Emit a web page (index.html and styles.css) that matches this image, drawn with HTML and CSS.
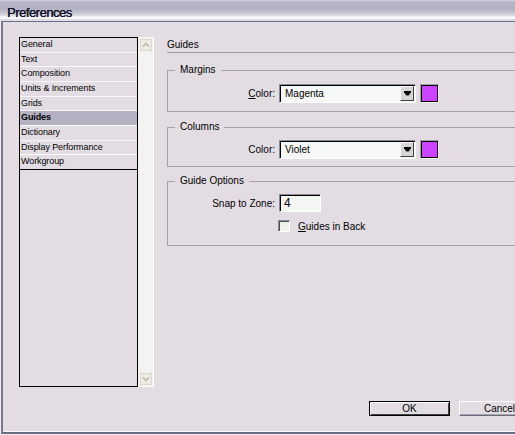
FILE: index.html
```html
<!DOCTYPE html>
<html>
<head>
<meta charset="utf-8">
<title>Preferences</title>
<link rel="stylesheet" href="styles.css">
</head>
<body>
<div class="window">
  <div class="titlebar"><span class="title">Preferences</span></div>
  <div class="client">
    <div class="inner">
      <div class="main">
        <div class="listwrap">
          <ul class="list">
            <li>General</li>
            <li>Text</li>
            <li>Composition</li>
            <li>Units &amp; Increments</li>
            <li>Grids</li>
            <li class="sel">Guides</li>
            <li>Dictionary</li>
            <li>Display Performance</li>
            <li class="last">Workgroup</li>
          </ul>
          <div class="scrollbar">
            <div class="sbtn"><svg width="12" height="12" viewBox="0 0 12 12"><rect x="0.5" y="0.5" width="11" height="11" fill="#ecece6" stroke="#d9d9cd"/><path d="M3 7.5 L6 4.5 L9 7.5" fill="none" stroke="#b9b9a9" stroke-width="1.6"/></svg></div>
            <div class="sbtn"><svg width="12" height="12" viewBox="0 0 12 12"><rect x="0.5" y="0.5" width="11" height="11" fill="#ecece6" stroke="#d9d9cd"/><path d="M3 4.5 L6 7.5 L9 4.5" fill="none" stroke="#b9b9a9" stroke-width="1.6"/></svg></div>
          </div>
        </div>
        <div class="panel">
          <div class="heading">Guides</div>
          <fieldset class="group g-margins">
            <legend>Margins</legend>
            <div class="row">
              <label class="lbl"><u>C</u>olor:</label>
              <div class="select"><span class="val">Magenta</span><span class="dd"><svg width="7" height="5" viewBox="0 0 7 5"><path d="M0 0h7v1.2L4.6 4.5H2.4L0 1.2z" fill="#000"/></svg></span></div>
              <div class="swatch"></div>
            </div>
          </fieldset>
          <fieldset class="group g-columns">
            <legend>Columns</legend>
            <div class="row">
              <label class="lbl">Color:</label>
              <div class="select"><span class="val">Violet</span><span class="dd"><svg width="7" height="5" viewBox="0 0 7 5"><path d="M0 0h7v1.2L4.6 4.5H2.4L0 1.2z" fill="#000"/></svg></span></div>
              <div class="swatch"></div>
            </div>
          </fieldset>
          <fieldset class="group g-options">
            <legend>Guide Options</legend>
            <div class="row row-snap">
              <label class="lbl">Snap to Zone:</label>
              <div class="input">4</div>
            </div>
            <div class="row row-check">
              <span class="check"></span>
              <span class="checklbl"><u>G</u>uides in Back</span>
            </div>
          </fieldset>
        </div>
      </div>
      <div class="footer">
        <button class="btn default">OK</button>
        <button class="btn">Cancel</button>
      </div>
    </div>
  </div>
</div>
</body>
</html>
```
FILE: styles.css
```css
* { box-sizing: border-box; }
html, body { margin: 0; padding: 0; }
body {
  width: 515px;
  height: 435px;
  overflow: hidden;
  background: #e3dde3;
  font-family: "Liberation Sans", Arial, sans-serif;
  font-size: 10px;
  color: #000;
}
.window {
  width: 560px;
  height: 435px;
  display: flex;
  flex-direction: column;
}
.titlebar {
  height: 21px;
  flex: none;
  padding: 6px 0 0 7px;
  background: linear-gradient(#d2d2da 0, #b6b6c6 2px, #b2b2c2 9px, #c2c2ce 12px, #d6d6de 15px, #f6f6f8 17px, #fcfcfd 19px, #e3dde3 19px);
}
.title {
  display: block;
  font-size: 13px;
  line-height: 14px;
  letter-spacing: -0.5px;
  color: #12122a;
  text-shadow: 0.3px 0 0 #12122a;
}
.client {
  flex: 1;
  border-left: 1px solid #f0eef2;
  border-bottom: 1px solid #f2f0f4;
  display: flex;
}
.inner {
  flex: 1;
  border-left: 2px solid #7a788a;
  border-top: 1px solid #69708e;
  border-bottom: 2px solid #6c6a7e;
  box-shadow: inset 0 -1px 0 #faf9fb;
  display: flex;
  flex-direction: column;
}
.main {
  display: flex;
  padding: 15px 0 0 16px;
}
.listwrap {
  display: flex;
  width: 135px;
  height: 350px;
  flex: none;
}
.list {
  list-style: none;
  margin: 0;
  padding: 0;
  width: 119px;
  height: 350px;
  border: 1px solid #000;
  background: #e3dde3;
}
.list li {
  height: 14.67px;
  line-height: 13.67px;
  border-bottom: 1px solid #f8f7fa;
  padding-left: 1px;
  font-size: 9px;
  letter-spacing: -0.1px;
  white-space: nowrap;
}
.list li.sel {
  background: #b4b2c2;
  font-weight: bold;
}
.list li.last { border-bottom-color: #000; }
.scrollbar {
  width: 16px;
  height: 350px;
  background: #f3f4f1;
  border-right: 1px solid #ffffff;
  border-bottom: 1px solid #ffffff;
  display: flex;
  flex-direction: column;
  justify-content: space-between;
  padding: 2px 2px 1px 2px;
}
.sbtn { width: 12px; height: 12px; }
.sbtn svg { display: block; }
.panel {
  margin-left: 13px;
  flex: 1;
  display: flex;
  flex-direction: column;
}
.heading {
  height: 16px;
  padding-top: 1px;
  line-height: 14px;
  border-bottom: 1px solid #9c98a8;
}
.group {
  margin: 0;
  padding: 8px 0 8px 0;
  border: 1px solid #a4a0ac;
  min-width: 0;
}
.group legend {
  margin-left: 7px;
  padding: 0 5px;
  line-height: 12px;
}
.g-margins { margin-top: 11px; }
.g-columns { margin-top: 9px; padding-top: 7px; padding-bottom: 7px; }
.g-options { margin-top: 8px; padding-top: 7px; padding-bottom: 13px; }
.row {
  display: grid;
  grid-template-columns: 107px 137px 19px;
  column-gap: 4px;
  align-items: center;
  height: 19px;
}
.lbl { text-align: right; white-space: nowrap; }
.select {
  height: 19px;
  display: flex;
  align-items: center;
  background: #f6f8f6;
  border: 1px solid;
  border-color: #8a8894 #ffffff #ffffff #8a8894;
  box-shadow: inset 1px 1px 0 #000;
  padding: 1px 1px 1px 5px;
}
.val { flex: 1; font-size: 10px; }
.dd {
  width: 14px;
  height: 15px;
  background: #d8d4da;
  border: 1px solid;
  border-color: #f8f8f8 #404040 #404040 #f8f8f8;
  display: flex;
  align-items: center;
  justify-content: center;
}
.dd svg { display: block; }
.swatch {
  width: 19px;
  height: 19px;
  border: 1px solid;
  border-color: #a09eaa #f6f6f6 #f6f6f6 #a09eaa;
  background: #cc44ff;
  box-shadow: inset 0 0 0 1px #000;
}
.row-snap { height: 18px; }
.input {
  width: 42px;
  height: 18px;
  background: #f4f6f4;
  border: 1px solid;
  border-color: #8a8894 #ffffff #ffffff #8a8894;
  box-shadow: inset 1px 1px 0 #000;
  padding-left: 4px;
  font-size: 12px;
  line-height: 16px;
}
.row-check {
  display: flex;
  align-items: center;
  height: 12px;
  margin-top: 8px;
  padding-left: 110px;
}
.check {
  width: 12px;
  height: 12px;
  background: #efefec;
  border: 1px solid;
  border-color: #8a8894 #ffffff #ffffff #8a8894;
  box-shadow: inset 1px 1px 0 #505050;
}
.checklbl { margin-left: 4px; }
.footer {
  display: flex;
  gap: 9px;
  margin-top: 14px;
  padding-left: 366px;
}
.btn {
  width: 81px;
  height: 15px;
  padding: 0;
  background: #e3dde3;
  font-family: "Liberation Sans", Arial, sans-serif;
  font-size: 10px;
  line-height: 12px;
  color: #000;
  border: 1px solid;
  border-color: #ffffff #6c6a78 #6c6a78 #ffffff;
  box-shadow: inset -1px -1px 0 #a8a6b4;
}
.btn.default {
  border: 1px solid #000;
  box-shadow: inset 1px 1px 0 #ffffff, inset -1px -1px 0 #404040;
}
```
